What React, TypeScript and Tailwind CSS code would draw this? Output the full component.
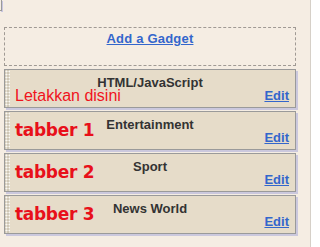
const widgets = [
  { title: "HTML/JavaScript", label: "Letakkan disini", big: false },
  { title: "Entertainment", label: "tabber 1", big: true },
  { title: "Sport", label: "tabber 2", big: true },
  { title: "News World", label: "tabber 3", big: true },
];

function Widget({ title, label, big }: { title: string; label: string; big: boolean }) {
  return (
    <div className="grid h-[39px] w-[292px] border border-[#9a9a9a] bg-[#e6dcc9] shadow-[2px_2px_0_#cbc8dd]">
      {/* drag grip */}
      <div className="col-start-1 row-start-1 w-[5px] justify-self-start bg-[radial-gradient(circle,#fbf9f4_0.9px,#cfc7b6_1.1px)] bg-[length:3px_3px]" />
      <div className="col-start-1 row-start-1 justify-self-center pt-[5px] text-[13px] leading-[15px] font-bold text-[#333] [font-family:'Liberation_Sans',Arial,sans-serif]">
        {title}
      </div>
      {big ? (
        <div className="col-start-1 row-start-1 justify-self-start pl-[10px] pt-[9px] text-[17px] leading-[19px] font-bold tracking-[-0.3px] text-[#e8101a] [font-family:'DejaVu_Sans',Verdana,sans-serif]">
          {label}
        </div>
      ) : (
        <div className="col-start-1 row-start-1 justify-self-start pl-[10px] pt-[17px] text-[16px] leading-[18px] text-[#f0131c] [font-family:'Liberation_Sans',Arial,sans-serif]">
          {label}
        </div>
      )}
      <a
        href="#"
        className="col-start-1 row-start-1 self-end justify-self-end pr-[6px] pb-[4px] text-[13px] leading-[15px] font-bold text-[#3366cc] underline [font-family:'Liberation_Sans',Arial,sans-serif]"
      >
        Edit
      </a>
    </div>
  );
}

export default function App() {
  return (
    <div className="h-[247px] w-[311px] border-r border-[#d6d0c8] bg-[#f5ede3]">
      <div className="h-[11px] w-[2px] border-r border-b border-[#9a9a9a] shadow-[1px_1px_0_#c9c6e0]" />
      <div className="ml-[4px] mt-[16px] flex h-[39px] w-[292px] justify-center border border-dashed border-[#a09a94] pt-[3px]">
        <a
          href="#"
          className="h-fit text-[13px] leading-[15px] font-bold tracking-[0.2px] text-[#3366cc] underline [font-family:'Liberation_Sans',Arial,sans-serif]"
        >
          Add a Gadget
        </a>
      </div>
      <div className="ml-[4px] mt-[3px] flex flex-col gap-[3px]">
        {widgets.map((w) => (
          <Widget key={w.label} {...w} />
        ))}
      </div>
    </div>
  );
}
